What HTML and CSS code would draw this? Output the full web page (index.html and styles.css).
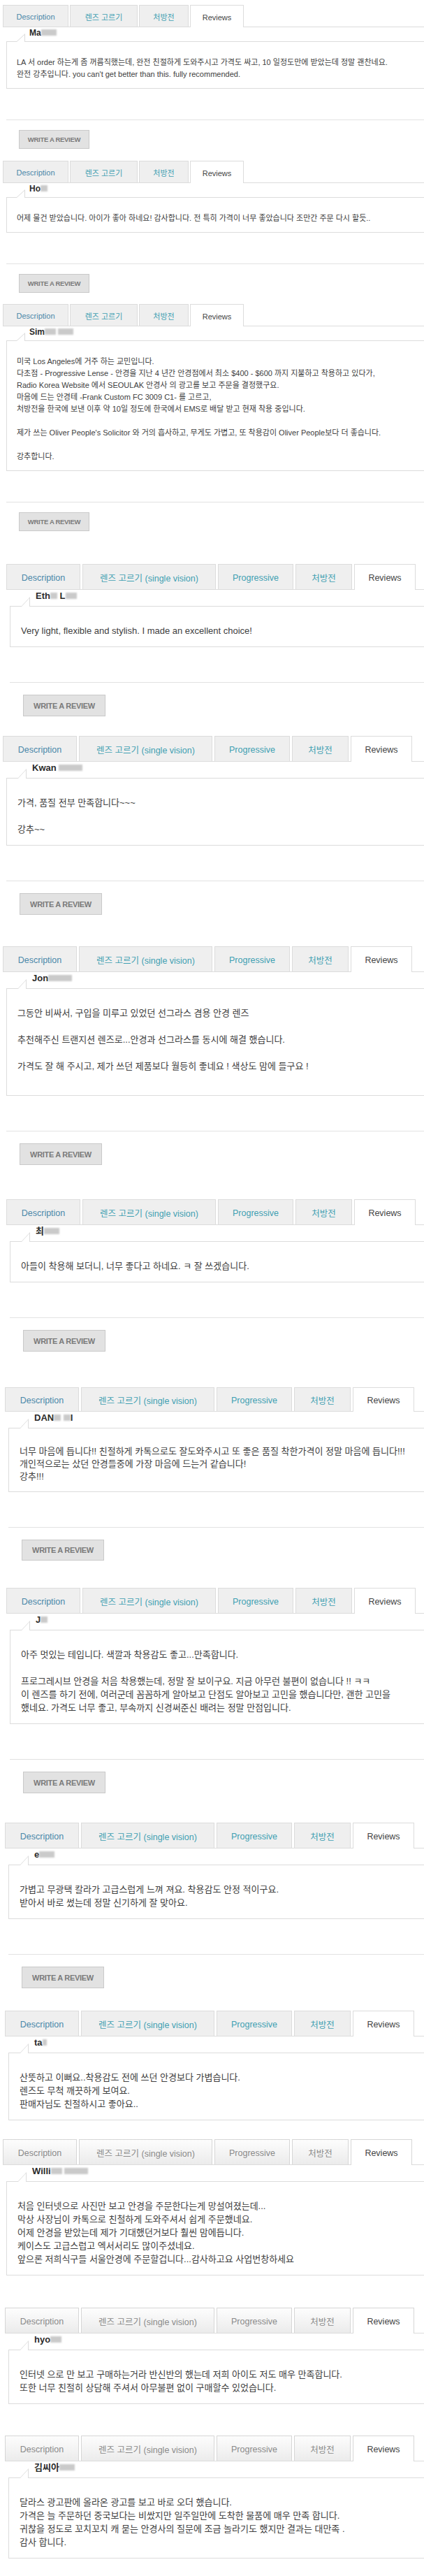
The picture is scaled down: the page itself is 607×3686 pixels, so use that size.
FILE: index.html
```html
<!DOCTYPE html>
<html lang="ko">
<head>
    <meta charset="UTF-8">
    <meta name="viewport" content="width=device-width, initial-scale=1.0">
    <title>Reviews</title>
    <link rel="stylesheet" href="styles.css">
</head>
<body>

    <!-- 1 -->
    <section class="panel panel--sm indent-a space-17">
        <ul class="tabs">
            <li class="tab tab-desc">Description</li>
            <li class="tab tab-lens">렌즈 고르기</li>
            <li class="tab tab-rx">처방전</li>
            <li class="tab tab-rev is-active">Reviews</li>
        </ul>
        <div class="review">
            <div class="review-name">Ma<span class="blur blur-md"></span></div>
            <div class="review-body">
                LA 서 order 하는게 좀 꺼름직했는데, 완전 친절하게 도와주시고 가격도 싸고, 10 일정도만에 받았는데 정말 괜찬네요.<br>
                완전 강추입니다. you can't get better than this. fully recommended.
            </div>
        </div>
        <div class="review-foot">
            <hr class="divider">
            <button class="btn-write">WRITE A REVIEW</button>
        </div>
    </section>

    <!-- 2 -->
    <section class="panel panel--sm indent-a space-16">
        <ul class="tabs">
            <li class="tab tab-desc">Description</li>
            <li class="tab tab-lens">렌즈 고르기</li>
            <li class="tab tab-rx">처방전</li>
            <li class="tab tab-rev is-active">Reviews</li>
        </ul>
        <div class="review">
            <div class="review-name">Ho<span class="blur blur-xs"></span></div>
            <div class="review-body">
                어제 물건 받았습니다. 아이가 좋아 하네요! 감사합니다. 전 특히 가격이 너무 좋았습니다 조만간 주문 다시 할듯..
            </div>
        </div>
        <div class="review-foot">
            <hr class="divider">
            <button class="btn-write">WRITE A REVIEW</button>
        </div>
    </section>

    <!-- 3 -->
    <section class="panel panel--sm indent-a space-47">
        <ul class="tabs">
            <li class="tab tab-desc">Description</li>
            <li class="tab tab-lens">렌즈 고르기</li>
            <li class="tab tab-rx">처방전</li>
            <li class="tab tab-rev is-active">Reviews</li>
        </ul>
        <div class="review">
            <div class="review-name">Sim<span class="blur blur-sm"></span> <span class="blur blur-md"></span></div>
            <div class="review-body">
                미국 Los Angeles에 거주 하는 교민입니다.<br>
                다초점 - Progressive Lense - 안경을 지난 4 년간 안경점에서 최소 $400 - $600 까지 지불하고 착용하고 있다가,<br>
                Radio Korea Website 에서 SEOULAK 안경사 의 광고를 보고 주문을 결정했구요.<br>
                마음에 드는 안경테 -Frank Custom FC 3009 C1- 를 고르고,<br>
                처방전을 한국에 보낸 이후 약 10일 정도에 한국에서 EMS로 배달 받고 현재 착용 중입니다.<br>
                <br>
                제가 쓰는 Oliver People's Solicitor 와 거의 흡사하고, 무게도 가볍고, 또 착용감이 Oliver People보다 더 좋습니다.<br>
                <br>
                강추합니다.
            </div>
        </div>
        <div class="review-foot">
            <hr class="divider">
            <button class="btn-write">WRITE A REVIEW</button>
        </div>
    </section>

    <!-- 4 -->
    <section class="panel indent-c space-28">
        <ul class="tabs">
            <li class="tab tab-desc">Description</li>
            <li class="tab tab-lens">렌즈 고르기 (single vision)</li>
            <li class="tab tab-prog">Progressive</li>
            <li class="tab tab-rx">처방전</li>
            <li class="tab tab-rev is-active">Reviews</li>
        </ul>
        <div class="review">
            <div class="review-name">Eth<span class="blur blur-xs"></span> L<span class="blur blur-sm"></span></div>
            <div class="review-body">
                Very light, flexible and stylish. I made an excellent choice!
            </div>
        </div>
        <div class="review-foot">
            <hr class="divider">
            <button class="btn-write">WRITE A REVIEW</button>
        </div>
    </section>

    <!-- 5 -->
    <section class="panel indent-a space-45">
        <ul class="tabs">
            <li class="tab tab-desc">Description</li>
            <li class="tab tab-lens">렌즈 고르기 (single vision)</li>
            <li class="tab tab-prog">Progressive</li>
            <li class="tab tab-rx">처방전</li>
            <li class="tab tab-rev is-active">Reviews</li>
        </ul>
        <div class="review">
            <div class="review-name">Kwan <span class="blur blur-lg"></span></div>
            <div class="review-body">
                가격, 품질 전부 만족합니다~~~<br>
                <br>
                강추~~
            </div>
        </div>
        <div class="review-foot">
            <hr class="divider">
            <button class="btn-write">WRITE A REVIEW</button>
        </div>
    </section>

    <!-- 6 -->
    <section class="panel indent-a space-49">
        <ul class="tabs">
            <li class="tab tab-desc">Description</li>
            <li class="tab tab-lens">렌즈 고르기 (single vision)</li>
            <li class="tab tab-prog">Progressive</li>
            <li class="tab tab-rx">처방전</li>
            <li class="tab tab-rev is-active">Reviews</li>
        </ul>
        <div class="review">
            <div class="review-name">Jon<span class="blur blur-lg"></span></div>
            <div class="review-body">
                그동안 비싸서, 구입을 미루고 있었던 선그라스 겸용 안경 렌즈<br>
                <br>
                추천해주신 트랜지션 렌즈로...안경과 선그라스를 동시에 해결 했습니다.<br>
                <br>
                가격도 잘 해 주시고, 제가 쓰던 제품보다 월등히 좋네요 ! 색상도 맘에 들구요 !<br>
                &nbsp;
            </div>
        </div>
        <div class="review-foot">
            <hr class="divider">
            <button class="btn-write">WRITE A REVIEW</button>
        </div>
    </section>

    <!-- 7 -->
    <section class="panel indent-c space-51">
        <ul class="tabs">
            <li class="tab tab-desc">Description</li>
            <li class="tab tab-lens">렌즈 고르기 (single vision)</li>
            <li class="tab tab-prog">Progressive</li>
            <li class="tab tab-rx">처방전</li>
            <li class="tab tab-rev is-active">Reviews</li>
        </ul>
        <div class="review">
            <div class="review-name">최<span class="blur blur-md"></span></div>
            <div class="review-body">
                아들이 착용해 보더니, 너무 좋다고 하네요. ㅋ 잘 쓰겠습니다.
            </div>
        </div>
        <div class="review-foot">
            <hr class="divider">
            <button class="btn-write">WRITE A REVIEW</button>
        </div>
    </section>

    <!-- 8 -->
    <section class="panel panel--tight indent-b space-39">
        <ul class="tabs">
            <li class="tab tab-desc">Description</li>
            <li class="tab tab-lens">렌즈 고르기 (single vision)</li>
            <li class="tab tab-prog">Progressive</li>
            <li class="tab tab-rx">처방전</li>
            <li class="tab tab-rev is-active">Reviews</li>
        </ul>
        <div class="review">
            <div class="review-name">DAN<span class="blur blur-xs"></span> <span class="blur blur-xs"></span>I</div>
            <div class="review-body">
                너무 마음에 듭니다!! 친절하게 카톡으로도 잘도와주시고 또 좋은 품질 착한가격이 정말 마음에 듭니다!!!<br>
                개인적으로는 샀던 안경들중에 가장 마음에 드는거 같습니다!<br>
                강추!!!
            </div>
        </div>
        <div class="review-foot">
            <hr class="divider">
            <button class="btn-write">WRITE A REVIEW</button>
        </div>
    </section>

    <!-- 9 -->
    <section class="panel indent-c space-42">
        <ul class="tabs">
            <li class="tab tab-desc">Description</li>
            <li class="tab tab-lens">렌즈 고르기 (single vision)</li>
            <li class="tab tab-prog">Progressive</li>
            <li class="tab tab-rx">처방전</li>
            <li class="tab tab-rev is-active">Reviews</li>
        </ul>
        <div class="review">
            <div class="review-name">J<span class="blur blur-xs"></span></div>
            <div class="review-body">
                아주 멋있는 테입니다. 색깔과 착용감도 좋고...만족합니다.<br>
                <br>
                프로그레시브 안경을 처음 착용했는데, 정말 잘 보이구요. 지금 아무런 불편이 없습니다 !! ㅋㅋ<br>
                이 렌즈를 하기 전에, 여러군데 꼼꼼하게 알아보고 단점도 알아보고 고민을 했습니다만, 괜한 고민을<br>
                했네요. 가격도 너무 좋고, 부속까지 신경써준신 배려는 정말 만점입니다.
            </div>
        </div>
        <div class="review-foot">
            <hr class="divider">
            <button class="btn-write">WRITE A REVIEW</button>
        </div>
    </section>

    <!-- 10 -->
    <section class="panel indent-b space-32">
        <ul class="tabs">
            <li class="tab tab-desc">Description</li>
            <li class="tab tab-lens">렌즈 고르기 (single vision)</li>
            <li class="tab tab-prog">Progressive</li>
            <li class="tab tab-rx">처방전</li>
            <li class="tab tab-rev is-active">Reviews</li>
        </ul>
        <div class="review">
            <div class="review-name">e<span class="blur blur-md"></span></div>
            <div class="review-body">
                가볍고 무광택 칼라가 고급스럽게 느껴 져요. 착용감도 안정 적이구요.<br>
                받아서 바로 썼는데 정말 신기하게 잘 맞아요.
            </div>
        </div>
        <div class="review-foot">
            <hr class="divider">
            <button class="btn-write">WRITE A REVIEW</button>
        </div>
    </section>

    <!-- 11 -->
    <section class="panel indent-b space-27">
        <ul class="tabs">
            <li class="tab tab-desc">Description</li>
            <li class="tab tab-lens">렌즈 고르기 (single vision)</li>
            <li class="tab tab-prog">Progressive</li>
            <li class="tab tab-rx">처방전</li>
            <li class="tab tab-rev is-active">Reviews</li>
        </ul>
        <div class="review">
            <div class="review-name">ta<span class="blur blur-xxs"></span></div>
            <div class="review-body">
                산뜻하고 이뻐요..착용감도 전에 쓰던 안경보다 가볍습니다.<br>
                렌즈도 무척 깨끗하게 보여요.<br>
                판매자님도 친절하시고 좋아요..
            </div>
        </div>
    </section>

    <!-- 12 -->
    <section class="panel panel--glossy indent-a space-46">
        <ul class="tabs">
            <li class="tab tab-desc">Description</li>
            <li class="tab tab-lens">렌즈 고르기 (single vision)</li>
            <li class="tab tab-prog">Progressive</li>
            <li class="tab tab-rx">처방전</li>
            <li class="tab tab-rev is-active">Reviews</li>
        </ul>
        <div class="review">
            <div class="review-name">Willi<span class="blur blur-sm"></span> <span class="blur blur-lg"></span></div>
            <div class="review-body">
                처음 인터넷으로 사진만 보고 안경을 주문한다는게 망설여졌는데...<br>
                막상 사장님이 카톡으로 친철하게 도와주셔서 쉽게 주문했네요.<br>
                어제 안경을 받았는데 제가 기대했던거보다 훨씬 맘에듭니다.<br>
                케이스도 고급스럽고 엑서서리도 많이주셨네요.<br>
                앞으론 저희식구들 서울안경에 주문할겁니다...감사하고요 사업번창하세요
            </div>
        </div>
    </section>

    <!-- 13 -->
    <section class="panel panel--glossy indent-b space-45">
        <ul class="tabs">
            <li class="tab tab-desc">Description</li>
            <li class="tab tab-lens">렌즈 고르기 (single vision)</li>
            <li class="tab tab-prog">Progressive</li>
            <li class="tab tab-rx">처방전</li>
            <li class="tab tab-rev is-active">Reviews</li>
        </ul>
        <div class="review">
            <div class="review-name">hyo<span class="blur blur-sm"></span></div>
            <div class="review-body">
                인터넷 으로 만 보고 구매하는거라 반신반의 했는데 저희 아이도 저도 매우 만족합니다.<br>
                또한 너무 친절히 상담해 주셔서 아무불편 없이 구매할수 있었습니다.
            </div>
        </div>
    </section>

    <!-- 14 -->
    <section class="panel panel--glossy indent-b">
        <ul class="tabs">
            <li class="tab tab-desc">Description</li>
            <li class="tab tab-lens">렌즈 고르기 (single vision)</li>
            <li class="tab tab-prog">Progressive</li>
            <li class="tab tab-rx">처방전</li>
            <li class="tab tab-rev is-active">Reviews</li>
        </ul>
        <div class="review">
            <div class="review-name">김씨아<span class="blur blur-md"></span></div>
            <div class="review-body">
                달라스 광고판에 올라온 광고를 보고 바로 오더 했습니다.<br>
                가격은 늘 주문하던 중국보다는 비쌌지만 일주일만에 도착한 물품에 매우 만족 합니다.<br>
                귀찮을 정도로 꼬치꼬치 캐 묻는 안경사의 질문에 조금 놀라기도 했지만 결과는 대만족 .<br>
                감사 합니다.
            </div>
        </div>
    </section>

</body>
</html>
```

FILE: styles.css
```css
body {
    margin: 0;
    padding-top: 7px;
    background: #fff;
    color: #404040;
    font-family: 'Liberation Sans', 'Noto Sans CJK KR', sans-serif;
    font-size: 13px;
    overflow-x: hidden;
}

/* one screenshot block = tabs + review + optional footer */
.panel {
    box-sizing: border-box;
}
.indent-a { padding-left: 4px; }
.indent-b { padding-left: 7px; }
.indent-c { padding-left: 9px; }

.space-16 { margin-bottom: 16px; }
.space-17 { margin-bottom: 17px; }
.space-27 { margin-bottom: 27px; }
.space-28 { margin-bottom: 28px; }
.space-32 { margin-bottom: 32px; }
.space-39 { margin-bottom: 39px; }
.space-42 { margin-bottom: 42px; }
.space-45 { margin-bottom: 45px; }
.space-46 { margin-bottom: 46px; }
.space-47 { margin-bottom: 47px; }
.space-49 { margin-bottom: 49px; }
.space-51 { margin-bottom: 51px; }

/* tabs */
.tabs {
    display: flex;
    align-items: flex-start;
    gap: 3px;
    list-style: none;
    margin: 0;
    padding: 0;
    height: 37px;
    box-sizing: border-box;
    border-bottom: 1px solid #dcdcdc;
}
.tab {
    box-sizing: border-box;
    height: 36px;
    display: flex;
    align-items: center;
    justify-content: center;
    padding-top: 2px;
    border: 1px solid #dcdcdc;
    border-bottom: 0;
    background: #efefef;
    color: #3f9fb2;
    font-size: 12.5px;
    white-space: nowrap;
}
.tab-desc { width: 106px; color: #4a88a9; }
.tab-lens { width: 191px; }
.tab-prog { width: 108px; }
.tab-rx { width: 81px; }
.tab-rev { width: 88px; }
.tab.is-active {
    height: 37px;
    margin-bottom: -1px;
    background: #fff;
    color: #444;
}

/* review bubble */
.review {
    margin-left: 5px;
}
.review-name {
    height: 23px;
    padding-left: 37px;
    font-weight: bold;
    font-size: 13px;
    line-height: 18px;
    color: #2a2a2a;
}
.blur {
    display: inline-block;
    height: 9px;
    background: #bdbdbd;
    filter: blur(1.2px);
    opacity: 0.8;
}
.blur-xxs { width: 6px; }
.blur-xs { width: 10px; }
.blur-sm { width: 16px; }
.blur-md { width: 22px; }
.blur-lg { width: 34px; }

.review-body {
    position: relative;
    margin-right: -20px;
    padding: 25px 0 13px 15px;
    border: 1px solid #dcdcdc;
    border-right: 0;
    line-height: 19px;
    white-space: nowrap;
}
.review-body::before,
.review-body::after {
    content: "";
    position: absolute;
    left: 16px;
    width: 0;
    height: 0;
    border-style: solid;
    border-color: transparent transparent #dcdcdc transparent;
}
.review-body::before {
    top: -14px;
    border-width: 0 0 13px 12px;
}
.review-body::after {
    top: -12px;
    border-width: 0 0 12px 11px;
    border-bottom-color: #fff;
}

/* footer with write button */
.review-foot {
    margin-left: 5px;
    padding-top: 50px;
}
.divider {
    height: 1px;
    margin: 0 0 17px;
    border: 0;
    background: #e2e2e2;
}
.btn-write {
    display: block;
    margin-left: 19px;
    width: 118px;
    height: 31px;
    padding: 0;
    border: 1px solid #c9c9c9;
    background: #e2e2e2;
    color: #7a7a7a;
    font-family: 'Liberation Sans', sans-serif;
    font-size: 11px;
    font-weight: bold;
    letter-spacing: -0.3px;
}

/* smaller screenshots (first three) */
.panel--sm .tabs {
    gap: 2px;
    height: 32px;
}
.panel--sm .tab {
    height: 31px;
    font-size: 11px;
}
.panel--sm .tab.is-active { height: 32px; }
.panel--sm .tab-desc { width: 94px; }
.panel--sm .tab-lens { width: 97px; }
.panel--sm .tab-rx { width: 71px; }
.panel--sm .tab-rev { width: 77px; }
.panel--sm .review-name {
    height: 20px;
    padding-left: 33px;
    font-size: 12px;
    line-height: 16px;
}
.panel--sm .review-body {
    padding: 21px 0 11px 14px;
    font-size: 11px;
    line-height: 17px;
}
.panel--sm .review-body::before {
    left: 14px;
    top: -12px;
    border-width: 0 0 11px 12px;
}
.panel--sm .review-body::after {
    left: 14px;
    top: -10px;
    border-width: 0 0 10px 11px;
}
.panel--sm .review-foot { padding-top: 44px; }
.panel--sm .divider { margin-bottom: 14px; }
.panel--sm .btn-write {
    margin-left: 18px;
    width: 101px;
    height: 27px;
    font-size: 9.5px;
}

/* slightly smaller shot */
.panel--tight .tabs { height: 35px; }
.panel--tight .tab { height: 34px; }
.panel--tight .tab.is-active { height: 35px; }
.panel--tight .review-body {
    padding: 24px 0 12px 15px;
    line-height: 18px;
}
.panel--tight .btn-write { height: 30px; }

/* last shots: glossy tabs, grey labels */
.panel--glossy .tab {
    background: linear-gradient(#fdfdfd, #ebebeb);
    color: #8a8a8a;
    border-color: #d6d6d6;
}
.panel--glossy .tab.is-active {
    background: #fff;
    color: #444;
}
```
